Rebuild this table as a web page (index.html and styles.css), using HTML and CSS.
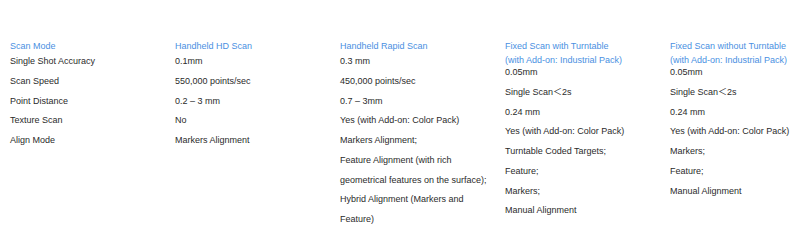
FILE: index.html
```html
<!DOCTYPE html>
<html lang="en">
<head>
<meta charset="utf-8">
<title>Scan Modes</title>
<link rel="stylesheet" href="styles.css">
</head>
<body>
<div class="specs">
  <div class="col">
    <div class="head">Scan Mode</div>
    <ul class="vals">
      <li>Single Shot Accuracy</li>
      <li>Scan Speed</li>
      <li>Point Distance</li>
      <li>Texture Scan</li>
      <li>Align Mode</li>
    </ul>
  </div>
  <div class="col">
    <div class="head">Handheld HD Scan</div>
    <ul class="vals">
      <li>0.1mm</li>
      <li>550,000 points/sec</li>
      <li>0.2 – 3 mm</li>
      <li>No</li>
      <li>Markers Alignment</li>
    </ul>
  </div>
  <div class="col">
    <div class="head">Handheld Rapid Scan</div>
    <ul class="vals">
      <li>0.3 mm</li>
      <li>450,000 points/sec</li>
      <li>0.7 – 3mm</li>
      <li>Yes (with Add-on: Color Pack)</li>
      <li>Markers Alignment;</li>
      <li>Feature Alignment (with rich geometrical features on the surface);</li>
      <li>Hybrid Alignment (Markers and Feature)</li>
    </ul>
  </div>
  <div class="col">
    <div class="head two">Fixed Scan with Turntable<br>(with Add-on: Industrial Pack)</div>
    <ul class="vals">
      <li>0.05mm</li>
      <li>Single Scan＜2s</li>
      <li>0.24 mm</li>
      <li>Yes (with Add-on: Color Pack)</li>
      <li>Turntable Coded Targets;</li>
      <li>Feature;</li>
      <li>Markers;</li>
      <li>Manual Alignment</li>
    </ul>
  </div>
  <div class="col">
    <div class="head two">Fixed Scan without Turntable<br>(with Add-on: Industrial Pack)</div>
    <ul class="vals">
      <li>0.05mm</li>
      <li>Single Scan＜2s</li>
      <li>0.24 mm</li>
      <li>Yes (with Add-on: Color Pack)</li>
      <li>Markers;</li>
      <li>Feature;</li>
      <li>Manual Alignment</li>
    </ul>
  </div>
</div>
</body>
</html>
```
FILE: styles.css
```css
html, body {
  margin: 0;
  padding: 0;
  background: #ffffff;
}
body {
  font-family: "Liberation Sans", Arial, "Noto Sans CJK SC", sans-serif;
  font-size: 9px;
  color: #2b2b2b;
  overflow: hidden;
}
.specs {
  display: grid;
  grid-template-columns: repeat(4, 165px) 1fr;
  padding: 38.5px 0 0 10px;
}
.col {
  padding-right: 12px;
}
.head {
  color: #4a90e2;
  line-height: 14.5px;
  margin-bottom: -1px;
}
.head.two {
  margin-bottom: -4.5px;
}
.vals {
  list-style: none;
  margin: 0;
  padding: 0;
  line-height: 19.75px;
}
```
